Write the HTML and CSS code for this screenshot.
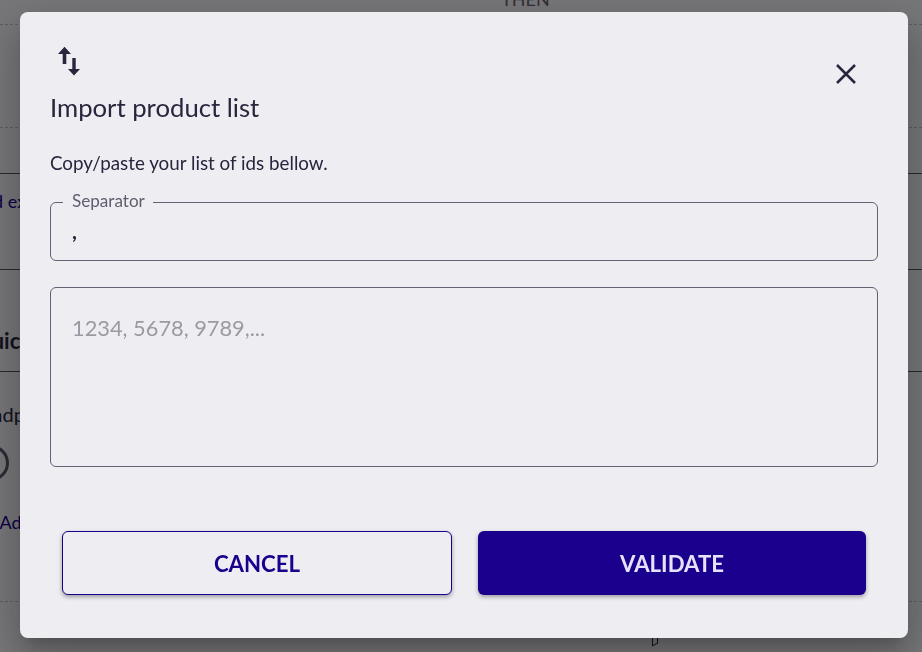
FILE: index.html
```html
<!DOCTYPE html>
<html lang="en">
<head>
<meta charset="utf-8">
<title>Import product list</title>
<link rel="stylesheet" href="styles.css">
</head>
<body>
<main class="page">
  <div class="then">THEN</div>
  <div class="row r1"></div>
  <div class="row r2"></div>
  <div class="row r3"><a class="link">Add ex</a></div>
  <div class="row r4"><b class="heading">Quick</b></div>
  <div class="row r5">
    <div class="sub">Endpoint</div>
    <div class="circle"></div>
    <a class="link add">+ Add</a>
  </div>
  <div class="foot"><span class="glyph"></span></div>
</main>
<div class="backdrop">
  <section class="modal">
    <header class="modal-head">
      <div>
        <svg class="swap" width="32" height="32" viewBox="0 0 32 32"><path d="M14.5 1.7 8 9h4.700v10h3.600V9H21z"/><path d="M22.300 13v11H18l6 6.500 6-6.500h-4.300V13z"/></svg>
        <h1>Import product list</h1>
      </div>
      <button class="close" aria-label="Close"><svg width="22" height="22" viewBox="0 0 22 22"><path d="M2 2 20 20M20 2 2 20"/></svg></button>
    </header>
    <p class="intro">Copy/paste your list of ids bellow.</p>
    <fieldset class="field">
      <legend>Separator</legend>
      <div class="value">,</div>
    </fieldset>
    <div class="area">1234, 5678, 9789,...</div>
    <footer class="actions">
      <button class="btn cancel">CANCEL</button>
      <button class="btn validate">VALIDATE</button>
    </footer>
  </section>
</div>
</body>
</html>
```
FILE: styles.css
```css
* { box-sizing: border-box; }
html, body { margin: 0; height: 100%; overflow: hidden; }
body { font-family: Lato, "Liberation Sans", sans-serif; color: #27263c; background: #eeedf2; }
.page { height: 652px; display: flex; flex-direction: column; font-size: 18px; overflow: hidden; }
.then { margin-top: -12px; text-align: center; padding-left: 129px; font-size: 18px; line-height: 22px; flex: none; height: 37px; border-bottom: 1px dashed #bbb; color: #62616f; }
.row { flex: none; }
.r1 { height: 103px; border-bottom: 1px dashed #bbb; }
.r2 { height: 46px; border-bottom: 1px solid #555; }
.r3 { height: 96px; border-bottom: 1px solid #555; padding-top: 16px; }
.r4 { height: 102px; border-bottom: 1px solid #555; padding: 58px 0 0 0; }
.r5 { height: 230px; border-bottom: 1px dashed #bbb; padding-top: 30px; position: relative; }
.link { color: #1a008c; margin-left: -29px; display: block; white-space: nowrap; line-height: 22px; }
.heading { font-size: 22px; line-height: 26px; margin-left: -26px; display: block; }
.sub { margin-left: -20px; font-size: 20px; line-height: 24px; }
.circle { width: 36px; height: 36px; border: 3px solid #57566a; border-radius: 50%; margin: 19px 0 0 -27px; }
.add { margin: 30px 0 0 -15px; }
.foot { flex: 1; }
.glyph { display: block; width: 6px; height: 12px; margin: 31px 0 0 652px; border: 1px solid #222; transform: skewY(-25deg); }
.backdrop { position: fixed; inset: 0; background: rgba(0,0,0,.5); display: flex; justify-content: center; padding-top: 12px; align-items: flex-start; }
.modal { width: 888px; height: 626px; margin-left: 6px; background: #eeedf2; border-radius: 8px; padding: 30px 30px 0; box-shadow: 0 11px 15px -7px rgba(0,0,0,.2), 0 24px 38px 3px rgba(0,0,0,.14), 0 9px 46px 8px rgba(0,0,0,.12); display: flex; flex-direction: column; }
.modal-head { display: flex; justify-content: space-between; align-items: flex-start; height: 104px; flex: none; }
.swap { display: block; margin-top: 3px; fill: #27263c; }
h1 { margin: 16px 0 0; font-weight: 400; font-size: 25.7px; line-height: 29px; color: #27263c; }
.close { background: none; border: 0; padding: 0; margin: 20px 20px 0 0; width: 24px; height: 24px; display: flex; align-items: center; justify-content: center; }
.close path { stroke: #27263c; stroke-width: 2.5; fill: none; }
.intro { margin: 5px 0 0; font-size: 18.8px; line-height: 24px; flex: none; }
.field { margin: 0; margin-top: 16px; padding: 0 14px 0 12px; height: 70px; border: 1px solid #636274; border-radius: 6px; flex: none; }
legend { padding: 0 8px 2px 9px; font-size: 17.1px; line-height: 20px; color: #5f5e6e; }
.value { font-size: 21px; font-weight: 700; line-height: 24px; padding: 6px 0 0 9px; }
.area { margin-top: 26px; height: 180px; border: 1px solid #636274; border-radius: 6px; padding: 25px 21px; font-size: 21.8px; line-height: 30px; color: #9b9aa3; flex: none; }
.actions { display: flex; gap: 26px; margin: 64px 12px 0; flex: none; }
.btn { flex: 1 1 0; height: 64px; border-radius: 6px; padding: 2px 0 0; font: 700 22.2px/1 Lato, "Liberation Sans", sans-serif; box-shadow: 0 2px 4px rgba(0,0,0,.35); }
.btn.cancel { background: #eeedf2; color: #1a008c; border: 1px solid #1a008c; }
.btn.validate { background: #1a008c; color: #e6e2fa; border: 0; }
```
